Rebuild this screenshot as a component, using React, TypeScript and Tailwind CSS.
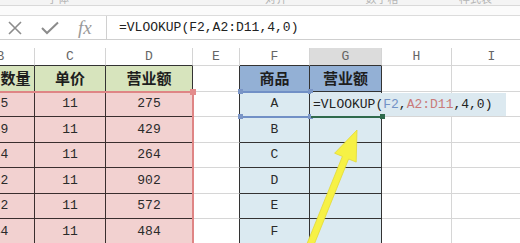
import React from "react";

const mono = "font-['Liberation_Mono','Noto_Sans_CJK_SC',monospace]";

const colKeys = ["B", "C", "D", "E", "F", "G", "H", "I"];
const qty = ["25", "39", "24", "82", "52", "44"];
const sales = ["275", "429", "264", "902", "572", "484"];
const goods = ["A", "B", "C", "D", "E", "F"];

// border + background per cell, written out so tailwind picks them up
function cellClass(col: string, row: number) {
  const inLeft = col === "B" || col === "C" || col === "D";
  const inRight = col === "F" || col === "G";
  if (row === 1) {
    if (inLeft) return "bg-[#d7e4bd] border-r border-b border-r-[#333] border-b-[#333]";
    if (inRight) return "bg-[#93b0d5] border-r border-b border-r-[#333] border-b-[#333]";
    if (col === "E") return "bg-white border-r border-b border-r-[#333] border-b-[#d6d6d6]";
    return "bg-white border-r border-b border-r-[#d6d6d6] border-b-[#d6d6d6]";
  }
  if (inLeft) return "bg-[#f2d1d0] border-r border-b border-r-[#3a2e2e] border-b-[#3a2e2e]";
  if (inRight) return "bg-[#dbeaf1] border-r border-b border-r-[#333] border-b-[#333]";
  if (col === "E") return "bg-white border-r border-b border-r-[#333] border-b-[#d6d6d6]";
  return "bg-white border-r border-b border-r-[#d6d6d6] border-b-[#d6d6d6]";
}

function cellText(col: string, row: number) {
  if (row === 1) {
    const head: Record<string, string> = { B: "销售数量", C: "单价", D: "营业额", F: "商品", G: "营业额" };
    return head[col] || "";
  }
  const i = row - 2;
  if (col === "B") return qty[i];
  if (col === "C") return "11";
  if (col === "D") return sales[i];
  if (col === "F") return goods[i];
  return "";
}

export default function App() {
  return (
    <div className="relative w-[520px] h-[243px] overflow-hidden bg-white">
      {/* ribbon remains */}
      <div className="h-[6px] overflow-hidden bg-[#f4f4f4] border-b border-[#d9d9d9]">
        <div className="flex -mt-[7px] text-[11px] leading-[11px] text-[#b4b4b4] font-['Noto_Sans_CJK_SC',sans-serif]">
          <span className="ml-[47px]">字体</span>
          <span className="ml-[196px]">对齐</span>
          <span className="ml-[50px]">¹</span>
          <span className="ml-[24px]">数字格</span>
          <span className="ml-[22px]">¹</span>
          <span className="ml-[34px]">样式表</span>
        </div>
      </div>
      <div className="h-[10px] bg-[#fbfbfb] border-b border-[#dcdcdc]" />

      {/* formula bar */}
      <div className="flex items-center h-[24px] border-b border-[#cfcfcf] bg-white">
        <div className="flex items-center w-[107px] h-full border-r border-[#d0d0d0]">
          <svg width="16" height="14" viewBox="0 0 16 14" className="ml-[7px]">
            <path d="M2 1 L14 13 M14 1 L2 13" stroke="#8c8c8c" strokeWidth="1.6" fill="none" />
          </svg>
          <svg width="20" height="14" viewBox="0 0 20 14" className="ml-[17px]">
            <path d="M2 7 L7 12 L18 1.5" stroke="#8c8c8c" strokeWidth="2" fill="none" />
          </svg>
          <span className="ml-[18px] font-['Liberation_Serif',serif] italic text-[19px] leading-none text-[#9a9a9a]">fx</span>
        </div>
        <div className={`pl-[12px] text-[13px] text-[#222] ${mono}`}>=VLOOKUP(F2,A2:D11,4,0)</div>
      </div>

      <div className="h-[8px] bg-white" />

      {/* sheet */}
      <div className="-ml-[33px] grid grid-cols-[68px_71px_87px_47px_70px_72px_70px_80px] grid-rows-[18px_26px_25px_26px_25px_26px_25px_26px]">
        {colKeys.map((c) => (
          <div
            key={"h" + c}
            className={`flex items-end justify-center text-[13px] leading-[16px] text-[#666] ${mono} border-r border-b border-r-[#d4d4d4] ${
              c === "G" ? "bg-[#dcdcdc]" : "bg-white"
            } ${c === "E" || c === "H" || c === "I" ? "border-b-[#d6d6d6]" : "border-b-[#333]"}`}
          >
            {c}
          </div>
        ))}
        {[1, 2, 3, 4, 5, 6, 7].map((r) =>
          colKeys.map((c) => (
            <div
              key={c + r}
              className={`flex items-center justify-center ${cellClass(c, r)} ${
                r === 1
                  ? "text-[15px] font-bold text-[#1e1e1e] font-['Noto_Sans_CJK_SC',sans-serif]"
                  : `text-[13px] text-[#2a2a2a] ${mono}`
              }`}
            >
              {cellText(c, r)}
            </div>
          ))
        )}
      </div>

      {/* reference range A2:D11 */}
      <div className="absolute left-0 top-[91px] w-[194px] h-[2px] bg-[#df8585]" />
      <div className="absolute left-[192px] top-[91px] w-[2px] h-[160px] bg-[#df8585]" />
      <div className="absolute left-[190px] top-[89px] w-[6px] h-[6px] bg-[#e38c8c]" />

      {/* reference F2 */}
      <div className="absolute left-[240px] top-[91px] w-[71px] h-[2px] bg-[#7190c6]" />
      <div className="absolute left-[240px] top-[116px] w-[71px] h-[2px] bg-[#7190c6]" />
      <div className="absolute left-[238px] top-[89px] w-[5px] h-[5px] bg-[#7a95c6]" />
      <div className="absolute left-[308px] top-[89px] w-[5px] h-[5px] bg-[#7a95c6]" />
      <div className="absolute left-[238px] top-[114px] w-[5px] h-[5px] bg-[#7a95c6]" />
      <div className="absolute left-[308px] top-[114px] w-[5px] h-[5px] bg-[#7a95c6]" />

      {/* editing cell G2 */}
      <div className={`absolute left-[311px] top-[93px] w-[195px] h-[23px] bg-[#dce9f0] flex items-center pl-[2px] text-[13px] text-[#222] ${mono}`}>
        =VLOOKUP(<span className="text-[#7393c6]">F2</span>,<span className="text-[#c97b7b]">A2:D11</span>,4,0)
      </div>
      <div className="absolute left-[311px] top-[116px] w-[72px] h-[2px] bg-[#2f6a4c]" />
      <div className="absolute left-[380px] top-[114px] w-[5px] h-[5px] bg-[#2f6a4c]" />

      {/* arrow */}
      <svg className="absolute left-0 top-0" width="520" height="243" viewBox="0 0 520 243">
        <polygon
          points="305.8,246.6 342.4,156.4 334.6,153.2 357,130 356.2,162.1 348.6,159 312.2,249.4"
          fill="#f6f145"
          stroke="#e3d935"
          strokeWidth="0.8"
        />
      </svg>
    </div>
  );
}
